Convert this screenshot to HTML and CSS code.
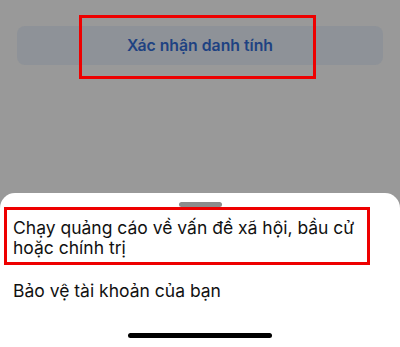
FILE: index.html
```html
<!DOCTYPE html>
<html lang="vi">
<head>
<meta charset="utf-8">
<link rel="stylesheet" href="styles.css">
</head>
<body>
<div class="screen">
  <div class="top">
    <div class="verify-btn">Xác nhận danh tính</div>
    <div class="mark mark-top"></div>
  </div>
  <div class="sheet">
    <div class="handle"></div>
    <div class="item item-first">Chạy quảng cáo về vấn đề xã hội, bầu cử hoặc chính trị
      <div class="mark mark-item"></div>
    </div>
    <div class="item item-second">Bảo vệ tài khoản của bạn</div>
    <div class="home-bar"></div>
  </div>
</div>
</body>
</html>
```
FILE: styles.css
```css
html, body {
  margin: 0;
  padding: 0;
}
body {
  width: 400px;
  height: 347px;
  overflow: hidden;
  background: #999999;
  font-family: "Inter", "Liberation Sans", sans-serif;
}
.screen {
  display: flex;
  flex-direction: column;
  height: 347px;
}
.top {
  position: relative;
  padding: 26px 17px 0;
  height: 167px;
}
.verify-btn {
  height: 39px;
  border-radius: 8px;
  background: #8e9298;
  color: #1e4282;
  font-size: 15.8px;
  font-weight: 600;
  display: flex;
  align-items: center;
  justify-content: center;
}
.mark {
  position: absolute;
  border: 3px solid #ee0000;
  box-sizing: border-box;
}
.mark-top {
  left: 79px;
  top: 15px;
  width: 237px;
  height: 64px;
}
.sheet {
  flex: 1;
  background: #ffffff;
  border-radius: 15px 15px 0 0;
  display: flex;
  flex-direction: column;
  position: relative;
}
.handle {
  width: 43px;
  height: 5px;
  border-radius: 3px;
  background: #8c8c8c;
  margin: 9px auto 0;
}
.item {
  position: relative;
  font-size: 17.5px;
  line-height: 20px;
  color: #111111;
  padding: 0 13px;
}
.item-first {
  padding-top: 11px;
  padding-bottom: 7px;
}
.item-second {
  margin-top: 16px;
}
.mark-item {
  left: 4px;
  top: 0;
  width: 366px;
  height: 58px;
}
.home-bar {
  width: 144px;
  height: 5px;
  border-radius: 3px;
  background: #000000;
  margin: auto auto 9px;
}
```
